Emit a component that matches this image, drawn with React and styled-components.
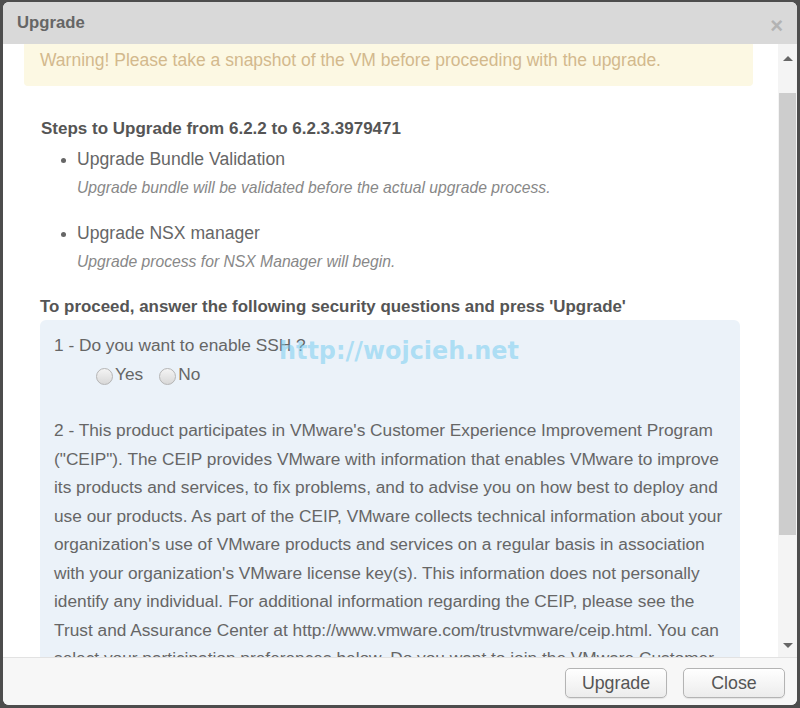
import styled, { createGlobalStyle } from 'styled-components'

const Global = createGlobalStyle`
    html, body {
        margin: 0;
        padding: 0;
        background: #4d4d4d;
        height: 708px;
        overflow: hidden;
    }
    * { box-sizing: border-box; }
`

const Dialog = styled.div`
    position: relative;
    margin: 2px 3px 0 3px;
    height: 703px;
    display: flex;
    flex-direction: column;
    background: #fff;
    border-radius: 6px;
    overflow: hidden;
    font-family: 'Liberation Sans', Arial, sans-serif;
`

const Header = styled.div`
    height: 42px;
    flex: none;
    display: flex;
    align-items: center;
    justify-content: space-between;
    padding: 0 14px 0 14px;
    background: #d9d9d9;
`

const Title = styled.h3`
    margin: 0;
    font-size: 16.7px;
    font-weight: bold;
    color: #666;
`

const CloseX = styled.span`
    font-size: 22px;
    font-weight: bold;
    color: #b3b3b3;
    margin-top: 6px;
    line-height: 1;
`

const Body = styled.div`
    flex: 1;
    display: flex;
    min-height: 0;
`

const Pane = styled.div`
    flex: 1;
    overflow: hidden;
    padding: 1px 25px 0 21px;
`

const Warning = styled.div`
    height: 42px;
    margin-top: -1px;
    background: #fcf8e3;
    border-radius: 0 0 4px 4px;
    color: #d3b98d;
    font-size: 17.5px;
    padding: 6px 16px 0 16px;
`

const Content = styled.div`
    padding: 0 13px 0 16px;
`

const StepsTitle = styled.div`
    margin: 33px 0 0 1px;
    font-size: 17px;
    line-height: 20px;
    font-weight: bold;
    color: #555;
`

const StepList = styled.ul`
    margin: 9px 0 0 0;
    padding: 0 0 0 37px;
`

const Step = styled.li`
    font-size: 17.6px;
    line-height: 22px;
    color: #666;
    margin-bottom: 24px;
    &::marker { font-size: 16px; }
`

const StepNote = styled.div`
    margin-top: 8px;
    font-size: 15.7px;
    line-height: 20px;
    font-style: italic;
    color: #888;
`

const Proceed = styled.div`
    margin-top: 0;
    font-size: 16.9px;
    line-height: 22px;
    font-weight: bold;
    color: #555;
`

const Questions = styled.div`
    position: relative;
    margin-top: 2px;
    background: #ebf2f9;
    border-radius: 6px;
    padding: 14px 14px 20px 14px;
    color: #666;
    font-size: 17.3px;
`

const Question = styled.div`
    line-height: 22px;
`

const Radios = styled.div`
    display: flex;
    align-items: center;
    gap: 16px;
    margin: 7px 0 0 42px;
    line-height: 22px;
`

const Radio = styled.label`
    display: flex;
    align-items: center;
    gap: 2px;
    &::before {
        content: '';
        width: 15px;
        height: 15px;
        margin-top: 5px;
        border-radius: 50%;
        border: 1px solid #b5b5b5;
        background: linear-gradient(#f4f4f4, #d8d8d8);
    }
`

const Paragraph = styled.div`
    margin-top: 31px;
    line-height: 28.5px;
`

const Line = styled.div`
    white-space: nowrap;
`

const Watermark = styled.div`
    position: absolute;
    left: 239px;
    top: 17px;
    font-family: 'DejaVu Sans', Verdana, sans-serif;
    font-weight: bold;
    font-size: 23.9px;
    color: rgba(120, 205, 240, 0.55);
    pointer-events: none;
`

const Scrollbar = styled.div`
    width: 19px;
    flex: none;
    display: flex;
    flex-direction: column;
    align-items: center;
    background: #f4f4f4;
`

const Arrow = styled.div`
    height: 49px;
    flex: none;
    display: flex;
    align-items: ${p => (p.$down ? 'flex-end' : 'flex-start')};
    padding: ${p => (p.$down ? '0 0 9px' : '12px 0 0')};
    &::after {
        content: '';
        border-left: 5px solid transparent;
        border-right: 5px solid transparent;
        ${p => (p.$down ? 'border-top' : 'border-bottom')}: 5px solid #666;
    }
`

const Thumb = styled.div`
    width: 17px;
    height: 442px;
    background: #cdcdcd;
`

const Track = styled.div`
    flex: 1;
`

const Footer = styled.div`
    height: 48px;
    flex: none;
    display: flex;
    justify-content: flex-end;
    gap: 16px;
    padding: 10px 12px 0 0;
    background: #f7f7f7;
    border-top: 1px solid #e2e2e2;
`

const Button = styled.button`
    width: 102px;
    height: 30px;
    font-family: 'Liberation Sans', Arial, sans-serif;
    font-size: 17.8px;
    color: #555;
    background: linear-gradient(#ffffff, #ececec);
    border: 1px solid #b4b4b4;
    border-radius: 5px;
    box-shadow: 0 1px 1px rgba(0, 0, 0, 0.08);
`

const ceip = [
    "2 - This product participates in VMware's Customer Experience Improvement Program",
    '("CEIP"). The CEIP provides VMware with information that enables VMware to improve',
    'its products and services, to fix problems, and to advise you on how best to deploy and',
    'use our products. As part of the CEIP, VMware collects technical information about your',
    "organization's use of VMware products and services on a regular basis in association",
    "with your organization's VMware license key(s). This information does not personally",
    'identify any individual. For additional information regarding the CEIP, please see the',
    'Trust and Assurance Center at http://www.vmware.com/trustvmware/ceip.html. You can',
    'select your participation preferences below. Do you want to join the VMware Customer',
    'Experience Improvement Program?',
]

const App = () => {
    return (
        <>
            <Global />
            <Dialog>
                <Header>
                    <Title>Upgrade</Title>
                    <CloseX>×</CloseX>
                </Header>
                <Body>
                    <Pane>
                        <Warning>Warning! Please take a snapshot of the VM before proceeding with the upgrade.</Warning>
                        <Content>
                            <StepsTitle>Steps to Upgrade from 6.2.2 to 6.2.3.3979471</StepsTitle>
                            <StepList>
                                <Step>
                                    Upgrade Bundle Validation
                                    <StepNote>Upgrade bundle will be validated before the actual upgrade process.</StepNote>
                                </Step>
                                <Step>
                                    Upgrade NSX manager
                                    <StepNote>Upgrade process for NSX Manager will begin.</StepNote>
                                </Step>
                            </StepList>
                            <Proceed>To proceed, answer the following security questions and press 'Upgrade'</Proceed>
                            <Questions>
                                <Question>1 - Do you want to enable SSH ?</Question>
                                <Radios>
                                    <Radio>Yes</Radio>
                                    <Radio>No</Radio>
                                </Radios>
                                <Paragraph>
                                    {ceip.map(l => (
                                        <Line key={l}>{l}</Line>
                                    ))}
                                </Paragraph>
                                <Watermark>http://wojcieh.net</Watermark>
                            </Questions>
                        </Content>
                    </Pane>
                    <Scrollbar>
                        <Arrow />
                        <Thumb />
                        <Track />
                        <Arrow $down />
                    </Scrollbar>
                </Body>
                <Footer>
                    <Button>Upgrade</Button>
                    <Button>Close</Button>
                </Footer>
            </Dialog>
        </>
    )
}

export default App
